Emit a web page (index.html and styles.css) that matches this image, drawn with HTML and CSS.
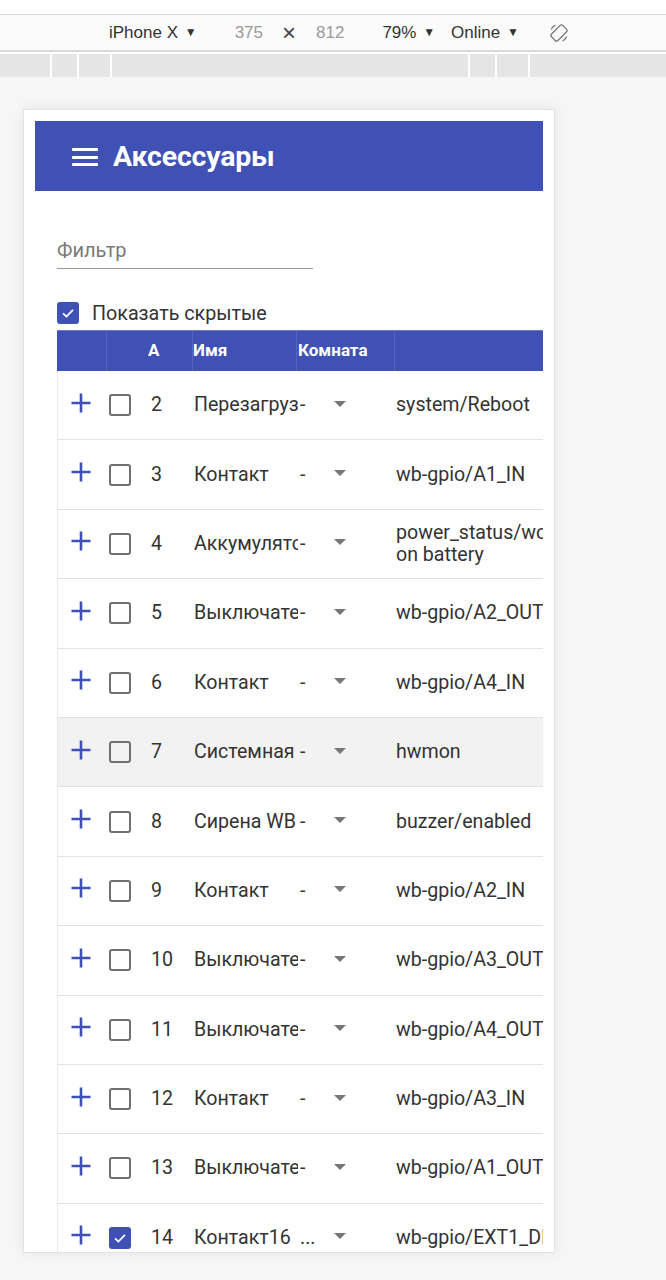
FILE: index.html
```html
<!DOCTYPE html>
<html lang="ru">
<head>
<meta charset="utf-8">
<title>Аксессуары</title>
<link rel="stylesheet" href="styles.css">
</head>
<body>
<div class="devtools">
  <div class="toolbar">
    <span class="tb-item tb-device">iPhone X <span class="caret">▼</span></span>
    <span class="tb-item tb-dim tb-w">375</span>
    <span class="tb-item tb-x">×</span>
    <span class="tb-item tb-dim tb-h">812</span>
    <span class="tb-item tb-zoom">79% <span class="caret">▼</span></span>
    <span class="tb-item tb-net">Online <span class="caret">▼</span></span>
    <svg class="tb-rotate" width="22" height="22" viewBox="0 0 22 22" fill="none" stroke="#7a7a7a" stroke-width="1.3">
      <rect x="6.5" y="3" width="9" height="16" rx="2" transform="rotate(45 11 11)"/>
      <path d="M3.2 7.5 A8.5 8.5 0 0 1 7.5 3.2" />
      <path d="M18.8 14.5 A8.5 8.5 0 0 1 14.5 18.8" />
    </svg>
  </div>
  <div class="ruler">
    <span class="seg s1"></span><span class="seg s2"></span><span class="seg s3"></span><span class="seg s4"></span><span class="seg s2"></span><span class="seg s3"></span><span class="seg s5"></span>
  </div>
</div>

<div class="stage">
  <div class="phone">
    <header class="appbar">
      <span class="burger"><i></i><i></i><i></i></span>
      <h1 class="title">Аксессуары</h1>
    </header>
    <div class="content">
      <div class="filter">Фильтр</div>
      <div class="show-hidden">
        <span class="cb checked"><svg width="16" height="16" viewBox="0 0 16 16"><path d="M3 8.3 L6.4 11.6 L13 4.8" fill="none" stroke="#fff" stroke-width="1.8"/></svg></span>
        <span class="sh-label">Показать скрытые</span>
      </div>
      <div class="table">
        <div class="row thead">
          <div class="c c1"></div>
          <div class="c c2 th-a">A</div>
          <div class="c c3">Имя</div>
          <div class="c c4">Комната</div>
          <div class="c c5"></div>
        </div>

        <div class="row">
          <div class="c c1"><svg class="plus" width="22" height="22" viewBox="0 0 22 22"><path d="M11 1.5V20.5M1.5 11H20.5" stroke="#3f51b5" stroke-width="2.6"/></svg></div>
          <div class="c c2"><span class="cb"></span><span class="num">2</span></div>
          <div class="c c3">Перезагрузка</div>
          <div class="c c4"><span class="room">-</span><span class="tri"></span></div>
          <div class="c c5">system/Reboot</div>
        </div>
        <div class="row">
          <div class="c c1"><svg class="plus" width="22" height="22" viewBox="0 0 22 22"><path d="M11 1.5V20.5M1.5 11H20.5" stroke="#3f51b5" stroke-width="2.6"/></svg></div>
          <div class="c c2"><span class="cb"></span><span class="num">3</span></div>
          <div class="c c3">Контакт</div>
          <div class="c c4"><span class="room">-</span><span class="tri"></span></div>
          <div class="c c5">wb-gpio/A1_IN</div>
        </div>
        <div class="row">
          <div class="c c1"><svg class="plus" width="22" height="22" viewBox="0 0 22 22"><path d="M11 1.5V20.5M1.5 11H20.5" stroke="#3f51b5" stroke-width="2.6"/></svg></div>
          <div class="c c2"><span class="cb"></span><span class="num">4</span></div>
          <div class="c c3">Аккумулятор</div>
          <div class="c c4"><span class="room">-</span><span class="tri"></span></div>
          <div class="c c5">power_status/working on battery</div>
        </div>
        <div class="row">
          <div class="c c1"><svg class="plus" width="22" height="22" viewBox="0 0 22 22"><path d="M11 1.5V20.5M1.5 11H20.5" stroke="#3f51b5" stroke-width="2.6"/></svg></div>
          <div class="c c2"><span class="cb"></span><span class="num">5</span></div>
          <div class="c c3">Выключатель</div>
          <div class="c c4"><span class="room">-</span><span class="tri"></span></div>
          <div class="c c5">wb-gpio/A2_OUT</div>
        </div>
        <div class="row">
          <div class="c c1"><svg class="plus" width="22" height="22" viewBox="0 0 22 22"><path d="M11 1.5V20.5M1.5 11H20.5" stroke="#3f51b5" stroke-width="2.6"/></svg></div>
          <div class="c c2"><span class="cb"></span><span class="num">6</span></div>
          <div class="c c3">Контакт</div>
          <div class="c c4"><span class="room">-</span><span class="tri"></span></div>
          <div class="c c5">wb-gpio/A4_IN</div>
        </div>
        <div class="row hover">
          <div class="c c1"><svg class="plus" width="22" height="22" viewBox="0 0 22 22"><path d="M11 1.5V20.5M1.5 11H20.5" stroke="#3f51b5" stroke-width="2.6"/></svg></div>
          <div class="c c2"><span class="cb"></span><span class="num">7</span></div>
          <div class="c c3">Системная</div>
          <div class="c c4"><span class="room">-</span><span class="tri"></span></div>
          <div class="c c5">hwmon</div>
        </div>
        <div class="row">
          <div class="c c1"><svg class="plus" width="22" height="22" viewBox="0 0 22 22"><path d="M11 1.5V20.5M1.5 11H20.5" stroke="#3f51b5" stroke-width="2.6"/></svg></div>
          <div class="c c2"><span class="cb"></span><span class="num">8</span></div>
          <div class="c c3">Сирена WB</div>
          <div class="c c4"><span class="room">-</span><span class="tri"></span></div>
          <div class="c c5">buzzer/enabled</div>
        </div>
        <div class="row">
          <div class="c c1"><svg class="plus" width="22" height="22" viewBox="0 0 22 22"><path d="M11 1.5V20.5M1.5 11H20.5" stroke="#3f51b5" stroke-width="2.6"/></svg></div>
          <div class="c c2"><span class="cb"></span><span class="num">9</span></div>
          <div class="c c3">Контакт</div>
          <div class="c c4"><span class="room">-</span><span class="tri"></span></div>
          <div class="c c5">wb-gpio/A2_IN</div>
        </div>
        <div class="row">
          <div class="c c1"><svg class="plus" width="22" height="22" viewBox="0 0 22 22"><path d="M11 1.5V20.5M1.5 11H20.5" stroke="#3f51b5" stroke-width="2.6"/></svg></div>
          <div class="c c2"><span class="cb"></span><span class="num">10</span></div>
          <div class="c c3">Выключатель</div>
          <div class="c c4"><span class="room">-</span><span class="tri"></span></div>
          <div class="c c5">wb-gpio/A3_OUT</div>
        </div>
        <div class="row">
          <div class="c c1"><svg class="plus" width="22" height="22" viewBox="0 0 22 22"><path d="M11 1.5V20.5M1.5 11H20.5" stroke="#3f51b5" stroke-width="2.6"/></svg></div>
          <div class="c c2"><span class="cb"></span><span class="num">11</span></div>
          <div class="c c3">Выключатель</div>
          <div class="c c4"><span class="room">-</span><span class="tri"></span></div>
          <div class="c c5">wb-gpio/A4_OUT</div>
        </div>
        <div class="row">
          <div class="c c1"><svg class="plus" width="22" height="22" viewBox="0 0 22 22"><path d="M11 1.5V20.5M1.5 11H20.5" stroke="#3f51b5" stroke-width="2.6"/></svg></div>
          <div class="c c2"><span class="cb"></span><span class="num">12</span></div>
          <div class="c c3">Контакт</div>
          <div class="c c4"><span class="room">-</span><span class="tri"></span></div>
          <div class="c c5">wb-gpio/A3_IN</div>
        </div>
        <div class="row">
          <div class="c c1"><svg class="plus" width="22" height="22" viewBox="0 0 22 22"><path d="M11 1.5V20.5M1.5 11H20.5" stroke="#3f51b5" stroke-width="2.6"/></svg></div>
          <div class="c c2"><span class="cb"></span><span class="num">13</span></div>
          <div class="c c3">Выключатель</div>
          <div class="c c4"><span class="room">-</span><span class="tri"></span></div>
          <div class="c c5">wb-gpio/A1_OUT</div>
        </div>
        <div class="row">
          <div class="c c1"><svg class="plus" width="22" height="22" viewBox="0 0 22 22"><path d="M11 1.5V20.5M1.5 11H20.5" stroke="#3f51b5" stroke-width="2.6"/></svg></div>
          <div class="c c2"><span class="cb checked"><svg width="16" height="16" viewBox="0 0 16 16"><path d="M3 8.3 L6.4 11.6 L13 4.8" fill="none" stroke="#fff" stroke-width="1.8"/></svg></span><span class="num">14</span></div>
          <div class="c c3">Контакт16</div>
          <div class="c c4"><span class="room">...</span><span class="tri"></span></div>
          <div class="c c5">wb-gpio/EXT1_DIN1</div>
        </div>
      </div>
    </div>
  </div>
</div>
</body>
</html>
```

FILE: styles.css
```css
* { box-sizing: border-box; }
html, body { margin: 0; padding: 0; }
body {
  width: 666px;
  height: 1280px;
  overflow: hidden;
  background: #f6f6f6;
  font-family: Roboto, "Noto Sans", sans-serif;
  color: #333;
}

/* devtools chrome */
.devtools {
  background: #fff;
  padding-top: 14px;
}
.toolbar {
  height: 38px;
  border-top: 1px solid #d6d6d6;
  border-bottom: 2px solid #d9d9d9;
  background: #fbfbfb;
  display: flex;
  align-items: center;
  padding-left: 109px;
  font-family: "Liberation Sans", Arial, sans-serif;
  font-size: 17px;
  color: #333;
}
.caret { font-size: 12px; position: relative; top: -2px; margin-left: 2px; }
.tb-dim { color: #9a9a9a; }
.tb-w { margin-left: 38px; }
.tb-x { margin-left: 19px; font-size: 24px; font-weight: 300; line-height: 1; color: #444; }
.tb-h { margin-left: 20px; }
.tb-zoom { margin-left: 38px; }
.tb-net { margin-left: 16px; }
.tb-rotate { margin-left: 29px; }

.ruler {
  display: flex;
  gap: 2px;
  margin-top: 2px;
  height: 23px;
  background: #fff;
}
.seg { background: #e5e5e5; height: 100%; }
.s1 { width: 50px; }
.s2 { width: 25px; }
.s3 { width: 31px; }
.s4 { width: 356px; }
.s5 { flex: 1; }

/* device stage */
.stage {
  padding: 32px 0 0 23px;
}
.phone {
  width: 532px;
  height: 1144px;
  background: #fff;
  border: 1px solid #e3e3e3;
  box-shadow: 0 0 12px rgba(0,0,0,0.07);
  padding: 11px 11px 0 11px;
  overflow: hidden;
}

.appbar {
  height: 70px;
  background: #3f51b5;
  display: flex;
  align-items: center;
  padding-left: 37px;
}
.burger {
  display: flex;
  flex-direction: column;
  justify-content: space-between;
  width: 26px;
  height: 18px;
  margin-right: 15px;
  margin-top: 2px;
}
.burger i {
  display: block;
  height: 3px;
  background: #fff;
  border-radius: 1px;
}
.title {
  margin: 0;
  color: #fff;
  font-size: 28.5px;
  font-weight: 700;
  letter-spacing: -0.2px;
}

.content {
  padding-left: 22px;
}
.filter {
  width: 256px;
  padding-top: 48px;
  padding-bottom: 7px;
  line-height: 22px;
  font-size: 20px;
  color: #7a7a7a;
  border-bottom: 1px solid #9a9a9a;
}
.show-hidden {
  margin-top: 33px;
  display: flex;
  align-items: center;
  height: 22px;
}
.sh-label {
  margin-left: 13px;
  font-size: 19.7px;
  color: #333;
}

.cb {
  width: 22px;
  height: 22px;
  border: 2.5px solid #707070;
  border-radius: 3px;
  display: inline-flex;
  align-items: center;
  justify-content: center;
  flex: none;
}
.cb.checked {
  background: #3f51b5;
  border-color: #3f51b5;
}

/* table */
.table {
  margin-top: 6px;
  width: 486px;
  overflow: hidden;
}
.row {
  display: grid;
  grid-template-columns: 50px 86px 104px 98px 200px;
  width: 538px;
  height: 69.4px;
  border-bottom: 1px solid #e2e2e2;
  border-left: 1px solid #e8e8e8;
  align-items: center;
  font-size: 19.6px;
  line-height: 22px;
}
.row.hover { background: #f2f2f2; }
.row.thead {
  height: 41px;
  background: #3f51b5;
  border: none;
  border-top: 1px solid #6c7bcb;
  color: #fff;
  font-size: 17px;
  font-weight: 700;
  align-items: stretch;
}
.thead .c {
  display: flex;
  align-items: center;
  border-right: 1px solid #5565c0;
  padding-bottom: 2px;
}
.thead .c5 { border-right: none; }
.thead .th-a { padding-left: 41px; }
.thead .c3 { padding-left: 0; }
.thead .c4 { padding-left: 1px; }

.c { min-width: 0; }
.c1 { padding-left: 12px; display: flex; align-items: center; }
.plus { margin-top: -5px; }
.c2 { display: flex; align-items: center; padding-left: 1px; }
.num { margin-left: 20px; }
.c3 {
  white-space: nowrap;
  overflow: hidden;
  padding-left: 0;
}
.c4 {
  display: flex;
  align-items: center;
}
.room {
  width: 36px;
  padding-left: 2px;
}
.tri {
  width: 0;
  height: 0;
  border-left: 6px solid transparent;
  border-right: 6px solid transparent;
  border-top: 6px solid #777;
  margin-top: -3px;
}
.c5 {
  white-space: normal;
}
```
